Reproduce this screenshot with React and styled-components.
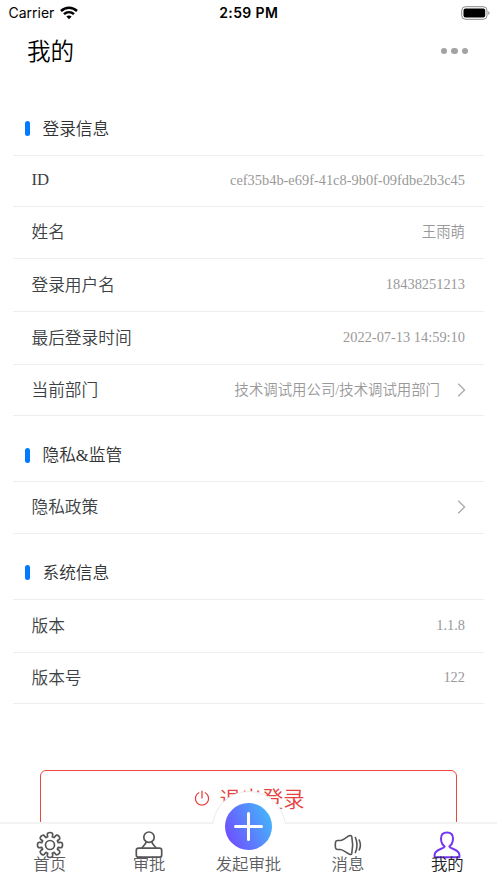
import styled, { createGlobalStyle } from 'styled-components';

const GlobalStyle = createGlobalStyle`
  * {
    box-sizing: border-box;
  }
  body {
    margin: 0;
    background: #fff;
    overflow: hidden;
    font-family: 'Liberation Serif', 'Noto Sans CJK SC', serif;
    font-weight: 350;
  }
  svg {
    display: block;
    flex: none;
  }
`

const Screen = styled.div`
  display: flex;
  flex-direction: column;
  width: 497px;
  height: 883px;
  overflow: hidden;
`
const StatusBar = styled.div`
  display: grid;
  grid-template-columns: 1fr auto 1fr;
  align-items: center;
  flex: none;
  height: 26px;
  padding: 0 7px 1px 8.5px;
  color: #000;
  font-family: Inter, sans-serif;
  font-size: 14px;
  font-weight: 400;
`
const Carrier = styled.div`
  display: flex;
  align-items: center;
  gap: 6px;
`
const Time = styled.div`
  font-weight: 600;
  letter-spacing: 0.4px;
  margin-left: -1px;
`
const Battery = styled.div`
  display: flex;
  justify-content: flex-end;
`
const Header = styled.header`
  display: flex;
  justify-content: space-between;
  align-items: center;
  flex: none;
  height: 50px;
  padding: 0 29px 0 27px;
`
const Title = styled.h1`
  margin: 0;
  padding-top: 2px;
  font-size: 23.6px;
  font-weight: 350;
  line-height: 36px;
  color: #000;
`
const Dots = styled.div`
  display: flex;
  gap: 4px;
`
const Dot = styled.span`
  width: 6.5px;
  height: 6.5px;
  border-radius: 50%;
  background: #a3a3a3;
`
const Content = styled.main`
  flex: 1;
  min-height: 0;
  overflow: hidden;
  padding: 26px 13px 0;
`
const SectionTitle = styled.h2`
  display: flex;
  align-items: center;
  gap: 12.5px;
  height: ${(props) => props.$height}px;
  margin: 0;
  padding: ${(props) => props.$top + 2}px 0 0 12px;
  font-size: 16.7px;
  font-weight: 350;
  line-height: 24px;
  color: #303133;

  &::before {
    content: '';
    width: 5px;
    height: 15px;
    margin-top: -2px;
    border-radius: 3px;
    background: #007aff;
  }
`
const List = styled.div`
  border-bottom: 1px solid #eee;
`
const Row = styled.div`
  display: flex;
  align-items: center;
  height: ${(props) => props.$height}px;
  padding: 0 18px 1px 18.5px;
  border-top: 1px solid #eee;
`
const Label = styled.span`
  flex: 1;
  padding: ${(props) => (props.$latin ? '0 0 2px' : '2px 0 0')};
  font-size: 16.7px;
  line-height: 24px;
  color: #3b4144;
`
const Value = styled.span`
  margin-right: ${(props) => (props.$arrow ? 0 : 1)}px;
  padding-bottom: ${(props) => (props.$latin ? 2 : 0)}px;
  font-size: 14.4px;
  line-height: 20px;
  color: #999;
`
const Arrow = styled.svg`
  margin-left: 17px;
`
const Logout = styled.button`
  display: flex;
  justify-content: center;
  align-items: center;
  gap: 9px;
  width: 417px;
  height: 57px;
  margin: 66px 0 0 27px;
  padding: 0 0 1px 2px;
  border: 1.5px solid #ee4540;
  border-radius: 6px;
  background: #fff;
  color: #e64340;
  font-family: inherit;
  font-weight: 350;
  font-size: 21.3px;
  line-height: 30px;
`
const LogoutText = styled.span`
  padding-top: 3px;
`
const TabBar = styled.nav`
  position: relative;
  display: grid;
  grid-template-columns: repeat(5, 1fr);
  flex: none;
  height: 61px;
  border-top: 2px solid #f3f3f3;
  background: #fff;
`
const Tab = styled.div`
  position: relative;
  display: flex;
  flex-direction: column;
  align-items: center;
  padding-top: 7px;
  color: ${(props) => (props.$active ? '#222' : '#5d5d61')};
`
const TabLabel = styled.span`
  margin-top: -6px;
  font-size: 16.4px;
  line-height: 24px;
  white-space: nowrap;
  z-index: 1;
`
const Bump = styled.div`
  position: absolute;
  left: 50%;
  top: -33px;
  width: 74px;
  height: 74px;
  margin-left: -37px;
  border: 1px solid #ebebeb;
  border-radius: 50%;
  background: #fff;
  clip-path: inset(0 0 41px 0);
`
const AddButton = styled.div`
  display: flex;
  justify-content: center;
  align-items: center;
  width: 47px;
  height: 47px;
  margin-top: -28px;
  border-radius: 50%;
  background: linear-gradient(65deg, #704cff 8%, #42bbfb 95%);
  z-index: 1;
`
const AddLabel = styled(TabLabel)`
  margin-top: 3px;
`

const sections = [
  {
    title: '登录信息',
    height: 53,
    top: 0,
    rows: [
      { label: 'ID', value: 'cef35b4b-e69f-41c8-9b0f-09fdbe2b3c45', height: 51 },
      { label: '姓名', value: '王雨萌', height: 52 },
      { label: '登录用户名', value: '18438251213', height: 53 },
      { label: '最后登录时间', value: '2022-07-13 14:59:10', height: 53 },
      { label: '当前部门', value: '技术调试用公司/技术调试用部门', height: 51, arrow: true },
    ],
  },
  {
    title: '隐私&监管',
    height: 65,
    top: 13,
    rows: [{ label: '隐私政策', value: '', height: 52, arrow: true }],
  },
  {
    title: '系统信息',
    height: 65,
    top: 12,
    rows: [
      { label: '版本', value: '1.1.8', height: 53 },
      { label: '版本号', value: '122', height: 51 },
    ],
  },
]

// latin glyphs sit a little lower than chinese ones
const isLatin = (text) => /^[\x20-\x7e]+$/.test(text)

function WifiIcon() {
  return (
    <svg width="18" height="14" viewBox="0 0 18 14" fill="none" stroke="#000" strokeWidth="2.5">
      <path d="M1 5C5.500 .7 12.500 .7 17 5" />
      <path d="M4 8.200C6.900 5.500 11.100 5.500 14 8.200" />
      <path d="M6.400 10.600Q9 8.500 11.600 10.600L9 13.200Z" fill="#000" stroke="none" />
    </svg>
  )
}

function BatteryIcon() {
  return (
    <svg width="29" height="14" viewBox="0 0 29 14">
      <rect x="0.700" y="0.700" width="25.300" height="12.600" rx="3.800" fill="none" stroke="#888" />
      <rect x="2.500" y="2.500" width="21.700" height="9" rx="2" fill="#000" />
      <path d="M27.300 5v4q1.300-.8 1.300-2t-1.300-2z" fill="#888" />
    </svg>
  )
}

function PowerIcon() {
  return (
    <svg width="16" height="17" viewBox="0 0 16 17" fill="none" stroke="currentColor" strokeWidth="1.3">
      <path d="M5.200 2.500a6.600 6.600 0 1 0 5.600 0M8 .8v7.700" />
    </svg>
  )
}

function GearIcon() {
  return (
    <svg width="28" height="28" viewBox="0 0 28 28" fill="none" stroke="#555" strokeWidth="1.700" strokeLinejoin="round">
      <circle cx="14" cy="14" r="4.500" />
      <path d="M11.700 5.800L11.300 3.800Q11 1.500 14 1.500T16.700 3.800L16.300 5.800L18.200 6.600L19.500 4.900Q21 3.300 22.800 5.200T23.100 8.500L21.400 9.800L22.200 11.700L24.200 11.300Q26.500 11 26.500 14T24.200 16.700L22.200 16.300L21.400 18.200L23.100 19.500Q24.700 21 22.800 22.800T19.500 23.100L18.200 21.400L16.300 22.200L16.700 24.200Q17 26.500 14 26.500T11.300 24.200L11.700 22.200L9.800 21.400L8.500 23.100Q7 24.700 5.200 22.800T4.900 19.500L6.600 18.200L5.800 16.300L3.800 16.700Q1.500 17 1.500 14T3.800 11.300L5.800 11.700L6.600 9.800L4.900 8.500Q3.300 7 5.200 5.200T8.500 4.900L9.800 6.600Z" />
    </svg>
  )
}

function StampIcon() {
  return (
    <svg width="28" height="28" viewBox="0 0 28 28" fill="none" stroke="#555" strokeWidth="1.700" strokeLinejoin="round">
      <circle cx="14" cy="6.200" r="5.200" />
      <path d="M11.300 10.700C11 13 8.500 15 6.800 17M16.700 10.700C17 13 19.500 15 21.200 17" />
      <rect x="1.300" y="17.200" width="25.400" height="9" rx="2.300" />
    </svg>
  )
}

function SoundIcon() {
  return (
    <svg width="28" height="28" viewBox="0 0 28 28" fill="none" stroke="#555" strokeWidth="1.600" strokeLinecap="round" strokeLinejoin="round">
      <path d="M3.500 9.500H6.200C9.500 9.500 12.500 5.500 16 4.600Q17.400 4.300 17.800 5.800Q19.600 14 17.800 22.200Q17.400 23.700 16 23.400C12.500 22.500 9.500 18.500 6.200 18.500H3.500Q2 18.500 1.500 16.700Q1 14 1.500 11.300Q2 9.500 3.500 9.500Z" />
      <path d="M21.400 6.500Q24.600 14 21.400 21.500M25.200 9Q27.600 14 25.200 19" />
    </svg>
  )
}

function UserIcon() {
  return (
    <svg width="28" height="28" viewBox="0 0 28 28" fill="none" stroke="#7437f4" strokeWidth="2" strokeLinejoin="round">
      <path d="M11.700 15.500C9.300 13.700 8 11 8 7.500C8 3.500 10.200 1.500 14 1.500S20 3.500 20 7.500C20 11 18.700 13.700 16.300 15.500C17 18 26.400 18 26.400 24V26.200H1.600V24C1.600 18 11 18 11.700 15.500Z" />
    </svg>
  )
}

export default function App() {
  return (
    <Screen>
      <GlobalStyle />
      <StatusBar>
        <Carrier>
          <span>Carrier</span>
          <WifiIcon />
        </Carrier>
        <Time>2:59 PM</Time>
        <Battery>
          <BatteryIcon />
        </Battery>
      </StatusBar>
      <Header>
        <Title>我的</Title>
        <Dots>
          <Dot />
          <Dot />
          <Dot />
        </Dots>
      </Header>
      <Content>
        {sections.map((section) => (
          <section key={section.title}>
            <SectionTitle $height={section.height} $top={section.top}>{section.title}</SectionTitle>
            <List>
              {section.rows.map((row) => (
                <Row key={row.label} $height={row.height}>
                  <Label $latin={isLatin(row.label)}>{row.label}</Label>
                  <Value $latin={isLatin(row.value)} $arrow={row.arrow}>{row.value}</Value>
                  {row.arrow && (
                    <Arrow width="9" height="14" viewBox="0 0 9 14" fill="none" stroke="#aaa" strokeWidth="1.300">
                      <path d="M1.200 .7L7.600 7L1.200 13.300" />
                    </Arrow>
                  )}
                </Row>
              ))}
            </List>
          </section>
        ))}
        <Logout>
          <PowerIcon />
          <LogoutText>退出登录</LogoutText>
        </Logout>
      </Content>
      <TabBar>
        <Bump />
        <Tab>
          <GearIcon />
          <TabLabel>首页</TabLabel>
        </Tab>
        <Tab>
          <StampIcon />
          <TabLabel>审批</TabLabel>
        </Tab>
        <Tab>
          <AddButton>
            <svg width="29" height="29" viewBox="0 0 29 29" stroke="#fff" strokeWidth="3" strokeLinecap="round">
              <path d="M14.500 1.500v26M1.500 14.500h26" />
            </svg>
          </AddButton>
          <AddLabel>发起审批</AddLabel>
        </Tab>
        <Tab>
          <SoundIcon />
          <TabLabel>消息</TabLabel>
        </Tab>
        <Tab $active>
          <UserIcon />
          <TabLabel>我的</TabLabel>
        </Tab>
      </TabBar>
    </Screen>
  )
}
